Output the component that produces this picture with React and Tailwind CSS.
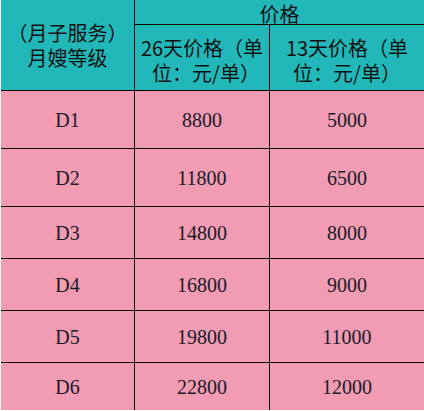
const rows = [
  { level: "D1", p26: "8800", p13: "5000", h: "h-[58px]" },
  { level: "D2", p26: "11800", p13: "6500", h: "h-[58px]" },
  { level: "D3", p26: "14800", p13: "8000", h: "h-[52px]" },
  { level: "D4", p26: "16800", p13: "9000", h: "h-[52px]" },
  { level: "D5", p26: "19800", p13: "11000", h: "h-[52px]" },
  { level: "D6", p26: "22800", p13: "12000", h: "h-[47px]" },
];

const cjk = "font-['Noto_Sans_CJK_SC',sans-serif]";
const num = "font-['Liberation_Serif','Noto_Sans_CJK_SC',serif]";

export default function App() {
  return (
    <div className="w-[424px] h-[411px] bg-white pl-px pb-px overflow-hidden">
      {/* header */}
      <div className={`grid grid-cols-[134px_135px_154px] grid-rows-[25px_66px] bg-[#22b8ba] text-[20px] leading-[25px] text-[#111] ${cjk}`}>
        <div className="row-span-2 flex flex-col items-center justify-center border-r border-b border-black">
          <span>（月子服务）</span>
          <span>月嫂等级</span>
        </div>
        <div className="col-span-2 flex items-center justify-center border-b border-black pt-[3px] leading-[20px]">
          价格
        </div>
        <div className="flex flex-col items-center justify-center pt-1 border-r border-b border-black">
          <span>26天价格（单</span>
          <span className="pl-2">位：元/单）</span>
        </div>
        <div className="flex flex-col items-center justify-center pt-1 border-b border-black">
          <span>13天价格（单</span>
          <span>位：元/单）</span>
        </div>
      </div>

      {/* body */}
      {rows.map((r, i) => (
        <div
          key={r.level}
          className={`grid grid-cols-[134px_135px_154px] bg-[#f19cb2] text-[20px] text-[#1a1a2a] ${num} ${r.h} ${i < rows.length - 1 ? "border-b border-black" : ""}`}
        >
          <div className="flex items-center justify-center border-r border-black">{r.level}</div>
          <div className="flex items-center justify-center border-r border-black">{r.p26}</div>
          <div className="flex items-center justify-center">{r.p13}</div>
        </div>
      ))}
    </div>
  );
}
